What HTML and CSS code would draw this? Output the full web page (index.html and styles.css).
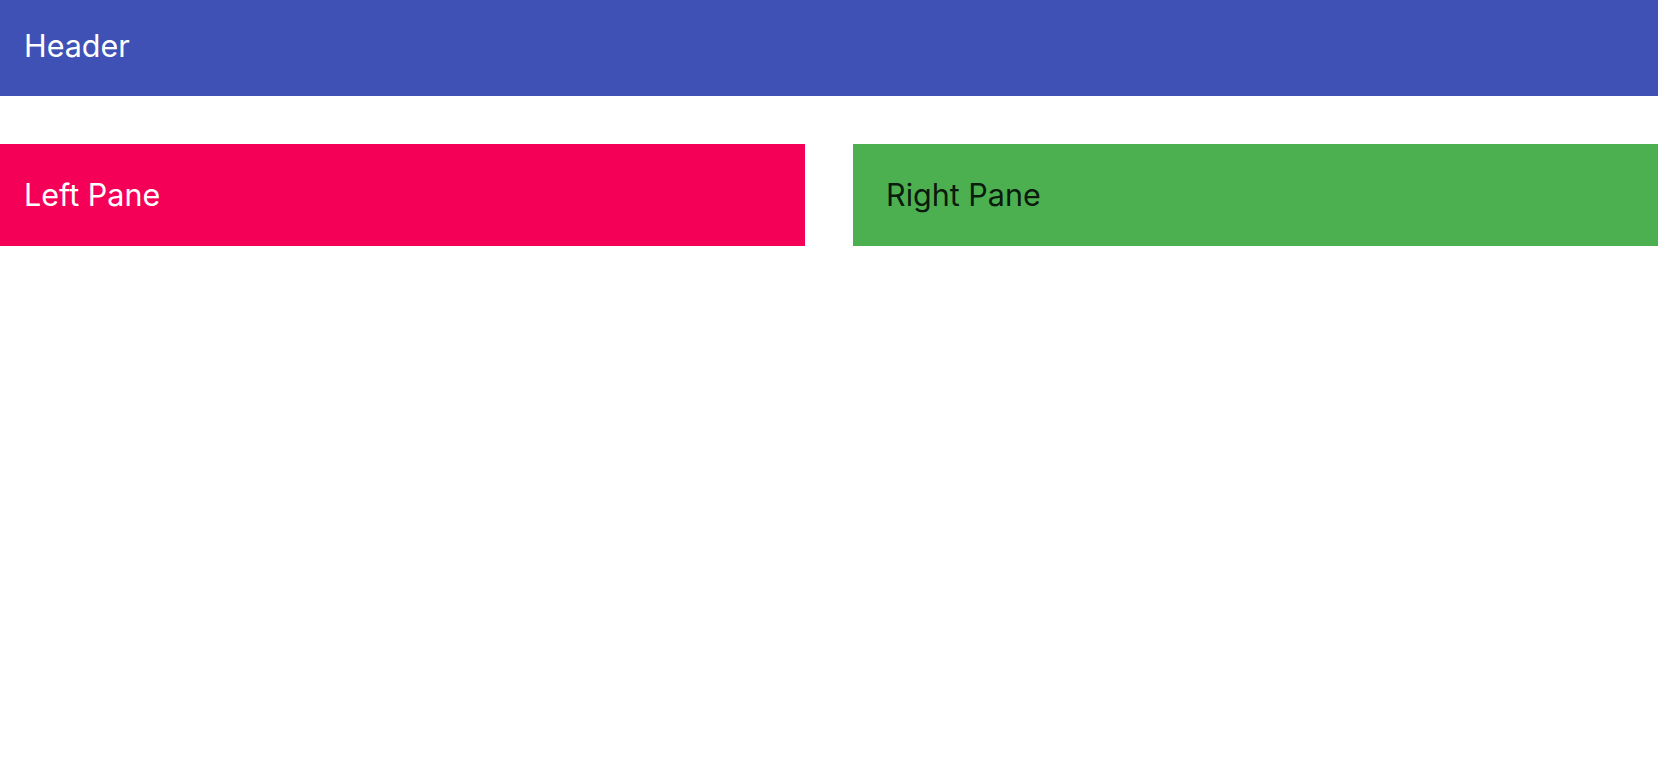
FILE: index.html
```html
<!DOCTYPE html>
<html>
<head>
<meta charset="utf-8">
<link rel="stylesheet" href="styles.css">
</head>
<body>
<header class="header"><span class="title">Header</span></header>
<main class="panes">
  <section class="pane pane-left"><span class="pane-title">Left Pane</span></section>
  <section class="pane pane-right"><span class="pane-title">Right Pane</span></section>
</main>
</body>
</html>
```
FILE: styles.css
```css
html, body {
  margin: 0;
  padding: 0;
  background: #ffffff;
  font-family: Inter, Roboto, "Noto Sans", "Liberation Sans", sans-serif;
}
.header {
  height: 96px;
  background: #3f51b5;
  color: #ffffff;
  display: flex;
  align-items: center;
  padding-left: 24px;
  box-sizing: border-box;
}
.title {
  font-size: 30.5px;
  line-height: 1;
  margin-top: -4px;
}
.panes {
  display: grid;
  grid-template-columns: 1fr 1fr;
  column-gap: 48px;
  margin-top: 48px;
}
.pane {
  height: 102px;
  display: flex;
  align-items: center;
  box-sizing: border-box;
}
.pane-left {
  background: #f50057;
  color: #ffffff;
  padding-left: 24px;
}
.pane-right {
  background: #4caf50;
  color: rgba(0, 0, 0, 0.87);
  padding-left: 33px;
}
.pane-title {
  font-size: 30.5px;
  line-height: 1;
}
```
